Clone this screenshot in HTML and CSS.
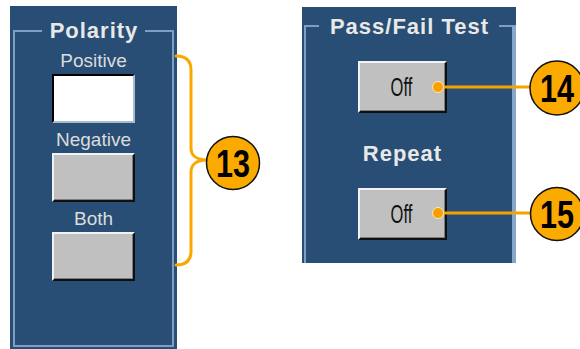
FILE: index.html
```html
<!DOCTYPE html>
<html lang="en">
<head>
<meta charset="utf-8">
<title>Polarity and Pass/Fail Test</title>
<link rel="stylesheet" href="styles.css">
</head>
<body>
<div class="stage">
  <section class="panel panel-polarity">
    <div class="group">
      <div class="group-head"><span class="group-title">Polarity</span></div>
      <div class="stack">
        <div class="label">Positive</div>
        <div class="field field-on"></div>
        <div class="label">Negative</div>
        <div class="field"></div>
        <div class="label">Both</div>
        <div class="field"></div>
      </div>
    </div>
  </section>
  <section class="panel panel-passfail">
    <div class="group">
      <div class="group-head"><span class="group-title group-title-wide">Pass/Fail Test</span></div>
      <div class="stack stack-shift">
        <button class="btn" type="button"><span class="btn-text">Off</span></button>
        <div class="sublabel">Repeat</div>
        <button class="btn" type="button"><span class="btn-text">Off</span></button>
      </div>
    </div>
  </section>
  <svg class="notes" width="580" height="349" viewBox="0 0 580 349" aria-hidden="true">
    <path class="brace" d="M176,56 C186,56 191,61 191,70 V148 C191,155 196,160 207,160 M207,160 C196,160 191,165 191,172 V251 C191,260 186,265 176,265"/>
    <circle class="callout" cx="233" cy="163" r="26.5"/>
    <text class="callout-num" x="233" y="177" textLength="34" lengthAdjust="spacingAndGlyphs">13</text>

    <line class="leader" x1="438" y1="87" x2="531" y2="87"/>
    <circle class="dot" cx="438" cy="87" r="5.5"/>
    <circle class="callout" cx="557" cy="88" r="27"/>
    <text class="callout-num" x="557" y="102" textLength="34" lengthAdjust="spacingAndGlyphs">14</text>

    <line class="leader" x1="438" y1="213" x2="531" y2="213"/>
    <circle class="dot" cx="438" cy="213" r="5.5"/>
    <circle class="callout" cx="557" cy="214" r="26.5"/>
    <text class="callout-num" x="557" y="228" textLength="34" lengthAdjust="spacingAndGlyphs">15</text>
  </svg>
</div>
</body>
</html>
```
FILE: styles.css
```css
* { box-sizing: border-box; }

html, body {
  margin: 0;
  padding: 0;
  background: #ffffff;
}

.stage {
  position: relative;
  width: 580px;
  height: 349px;
  overflow: hidden;
  display: flex;
  align-items: flex-start;
  gap: 125px;
  padding-left: 10px;
  font-family: "Liberation Sans", Arial, sans-serif;
}

.panel {
  background: #284e75;
  display: flex;
  flex-direction: column;
}

.panel-polarity {
  margin-top: 6px;
  width: 167px;
  height: 343px;
  padding: 24px 3px 2px 3px;
}

.panel-passfail {
  margin-top: 7px;
  width: 214px;
  height: 256px;
  padding: 18px 0 0 2px;
}

.group {
  flex: 1;
  border: 2px solid #7f9ec4;
}

.panel-passfail .group {
  border-bottom: none;
  border-right: 4px solid #86a7ca;
}

.group-head {
  margin-top: -11px;
  height: 20px;
  display: flex;
  justify-content: center;
}

.panel-passfail .group-head {
  margin-top: -10px;
}

.group-title {
  display: block;
  background: #284e75;
  padding: 0 7px 0 8px;
  font-size: 22px;
  font-weight: bold;
  line-height: 20px;
  letter-spacing: 1px;
  color: #e8e8e8;
}

.group-title-wide {
  padding: 0 10px 0 11px;
}

.stack {
  display: flex;
  flex-direction: column;
  align-items: center;
  padding-top: 3px;
}

.stack-shift {
  padding-right: 13px;
  padding-top: 0;
}

.label {
  margin-top: 7px;
  height: 20px;
  font-size: 19px;
  line-height: 20px;
  color: #dcdcdc;
}

.field {
  margin-top: 3px;
  width: 83px;
  height: 49px;
  background: #c0c0c0;
  border: 2px solid;
  border-color: #f2f2f2 #101010 #101010 #f2f2f2;
  box-shadow: inset -1px -1px 0 #7c7c7c;
}

.field-on {
  background: #ffffff;
  border-color: #000000 #a9bccf #a9bccf #000000;
  box-shadow: none;
}

.btn {
  margin-top: 24px;
  width: 89px;
  height: 52px;
  padding: 0 3px 0 0;
  display: flex;
  align-items: center;
  justify-content: center;
  background: #c0c0c0;
  border: 2px solid;
  border-color: #f2f2f2 #101010 #101010 #f2f2f2;
  box-shadow: inset -1px -1px 0 #7c7c7c;
  font-family: "Liberation Sans", Arial, sans-serif;
}

.btn-text {
  display: inline-block;
  font-size: 25px;
  line-height: 22px;
  color: #111111;
  transform: scaleX(0.66);
}

.sublabel {
  margin-top: 31px;
  height: 20px;
  font-size: 22px;
  font-weight: bold;
  line-height: 20px;
  letter-spacing: 1px;
  color: #e8e8e8;
}

.notes {
  position: absolute;
  left: 0;
  top: 0;
  pointer-events: none;
}

.brace {
  fill: none;
  stroke: #f9a800;
  stroke-width: 3;
  stroke-linecap: round;
}

.leader {
  stroke: #f5a300;
  stroke-width: 3;
}

.dot {
  fill: #f7a000;
  stroke: #ffe9b8;
  stroke-width: 1;
}

.callout {
  fill: #fbaa00;
  stroke: #111111;
  stroke-width: 1.5;
}

.callout-num {
  font-family: "Liberation Sans", Arial, sans-serif;
  font-size: 38px;
  font-weight: bold;
  fill: #000000;
  text-anchor: middle;
}
```
